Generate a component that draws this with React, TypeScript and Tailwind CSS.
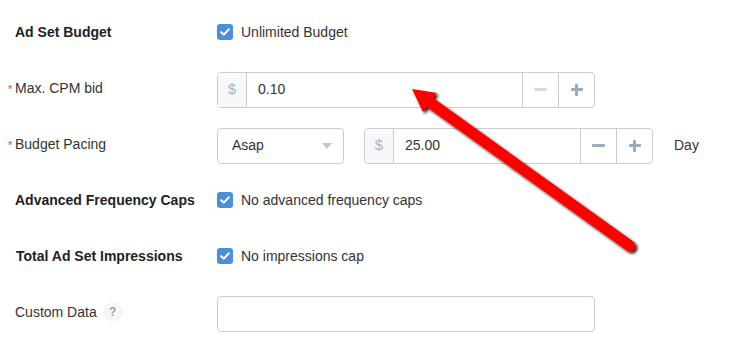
import React from 'react';

const Check = () => (
  <span className="w-4 h-4 rounded-[3px] bg-[#4a90d9] flex items-center justify-center shrink-0">
    <svg width="10" height="8" viewBox="0 0 10 8">
      <path d="M1.2 4.2 L3.8 6.6 L8.8 1.4" stroke="white" strokeWidth="2" fill="none" strokeLinecap="round" strokeLinejoin="round" />
    </svg>
  </span>
);

const Minus = ({ light }: { light?: boolean }) => (
  <span className={`w-[13px] h-[3px] rounded-[1px] ${light ? 'bg-[#d3dae3]' : 'bg-[#9caabd]'}`} />
);

const Plus = () => (
  <span className="relative w-[12px] h-[12px] flex items-center justify-center">
    <span className="absolute w-[12px] h-[3px] bg-[#9caabd] rounded-[1px]" />
    <span className="absolute w-[3px] h-[12px] bg-[#9caabd] rounded-[1px]" />
  </span>
);

const NumberGroup = ({ value, width, minusLight }: { value: string; width: string; minusLight?: boolean }) => (
  <div className={`flex h-[36px] ${width} border border-[#c9cdd3] rounded-[4px] overflow-hidden`}>
    <div className="w-[29px] bg-[#f7f8fa] border-r border-[#c9cdd3] flex items-center justify-center text-[#a9b4c4] text-[15px]">$</div>
    <div className="flex-1 flex items-center pl-[11px] text-[#333]">{value}</div>
    <div className="w-[36px] border-l border-[#c9cdd3] flex items-center justify-center">
      <Minus light={minusLight} />
    </div>
    <div className="w-[36px] border-l border-[#c9cdd3] flex items-center justify-center">
      <Plus />
    </div>
  </div>
);

const Row = ({ label, children, required, bold, field }: { label: React.ReactNode; children: React.ReactNode; required?: boolean; bold?: boolean; field?: boolean }) => (
  <div className="flex items-center h-[56px]">
    <div className={`w-[217px] shrink-0 flex items-baseline ${required ? 'pl-[8px]' : 'pl-[15px]'} ${bold ? 'font-bold text-[#222]' : 'text-[#333]'}`}>
      {required && <span className="w-[7px] text-[#e04848] text-[11px]">*</span>}
      {label}
    </div>
    <div className={`flex items-center ${field ? 'mt-[3px]' : ''}`}>{children}</div>
  </div>
);

const App = () => {
  return (
    <div className="relative w-[734px] h-[351px] bg-white overflow-hidden text-[14px]" style={{ fontFamily: '"Liberation Sans", Arial, sans-serif' }}>
      <div className="pt-[4px]">
        <Row label="Ad Set Budget" bold>
          <Check />
          <span className="ml-2 text-[#333]">Unlimited Budget</span>
        </Row>
        <Row label="Max. CPM bid" required field>
          <NumberGroup value="0.10" width="w-[378px]" minusLight />
        </Row>
        <Row label="Budget Pacing" required field>
          <div className="w-[127px] h-[36px] border border-[#c9cdd3] rounded-[4px] flex items-center justify-between pl-[14px] pr-[11px] text-[#333]">
            <span>Asap</span>
            <svg width="10" height="6" viewBox="0 0 10 6"><path d="M0 0 L10 0 L5 6 Z" fill="#c3cad3" /></svg>
          </div>
          <div className="ml-[20px]">
            <NumberGroup value="25.00" width="w-[289px]" />
          </div>
          <span className="ml-[21px] text-[#333]">Day</span>
        </Row>
        <Row label="Advanced Frequency Caps" bold>
          <Check />
          <span className="ml-2 text-[#333]">No advanced frequency caps</span>
        </Row>
        <Row label={<span className="pl-px">Total Ad Set Impressions</span>} bold>
          <Check />
          <span className="ml-2 text-[#333]">No impressions cap</span>
        </Row>
        <Row field label={
          <span className="flex items-center">
            Custom Data
            <span className="ml-[6px] w-[20px] h-[20px] rounded-full bg-[#f5f6f8] flex items-center justify-center text-[12px] font-bold text-[#9aa0a8]">?</span>
          </span>
        }>
          <div className="w-[378px] h-[36px] border border-[#c9cdd3] rounded-[4px]" />
        </Row>
      </div>

      <svg className="absolute left-0 top-0 pointer-events-none" width="734" height="351">
        <defs>
          <filter id="sh" x="-20%" y="-20%" width="140%" height="140%">
            <feGaussianBlur in="SourceAlpha" stdDeviation="1.5" />
            <feOffset dx="2" dy="2" result="b" />
            <feComponentTransfer><feFuncA type="linear" slope="0.9" /></feComponentTransfer>
            <feMerge><feMergeNode /><feMergeNode in="SourceGraphic" /></feMerge>
          </filter>
        </defs>
        <g filter="url(#sh)">
          <line x1="428" y1="101" x2="630" y2="246" stroke="#ff0000" strokeWidth="11" strokeLinecap="round" />
          <path d="M412 89 L437 93 L423 112 Z" fill="#ff0000" />
        </g>
      </svg>
    </div>
  );
};

export default App;
